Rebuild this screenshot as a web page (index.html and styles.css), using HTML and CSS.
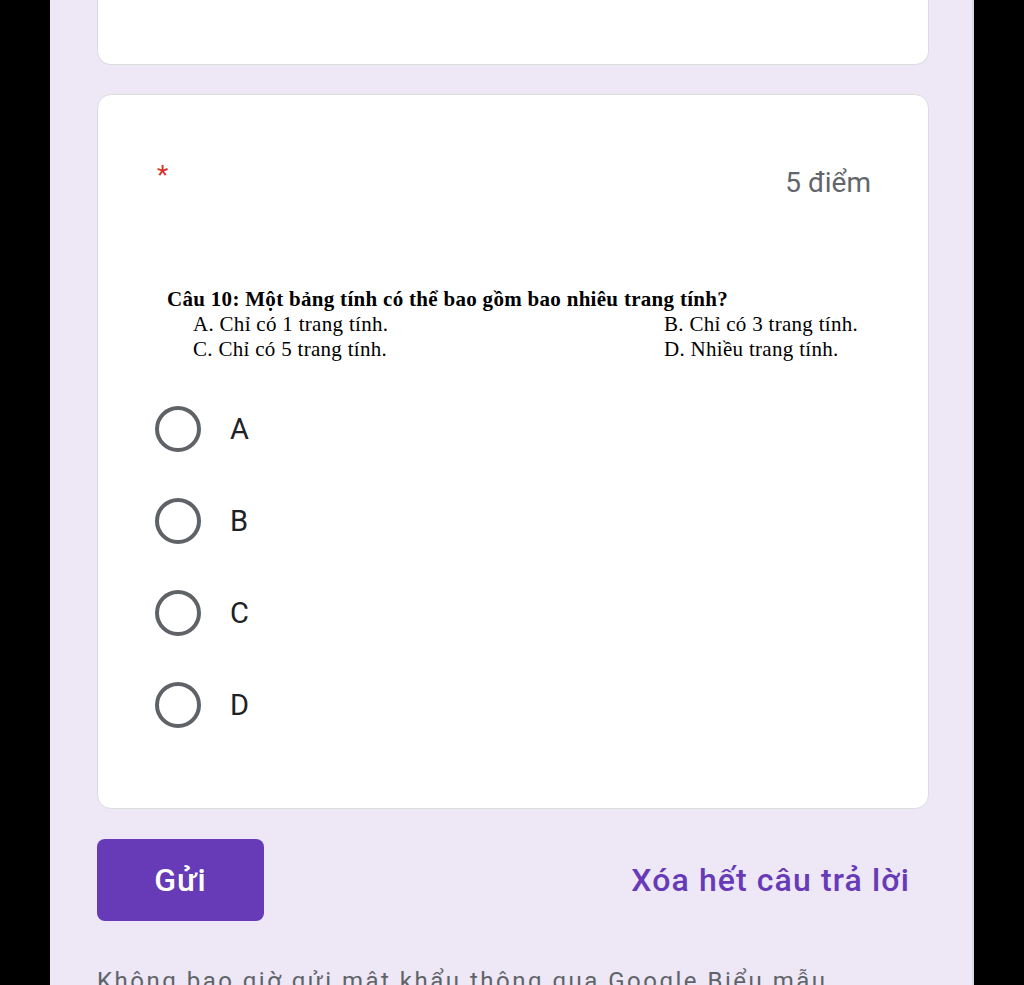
FILE: index.html
```html
<!DOCTYPE html>
<html lang="vi">
<head>
    <meta charset="UTF-8">
    <meta name="viewport" content="width=device-width, initial-scale=1.0">
    <title>Biểu mẫu</title>
    <link rel="stylesheet" href="styles.css">
</head>
<body>
    <div class="page">
        <!-- Thẻ câu hỏi trước (bị cắt) -->
        <div class="card card-cut"></div>

        <!-- Câu 10 -->
        <div class="card question">
            <div class="q-head">
                <span class="required">*</span>
                <span class="points">5 điểm</span>
            </div>

            <div class="q-text">
                <p class="q-title">Câu 10: Một bảng tính có thể bao gồm bao nhiêu trang tính?</p>
                <div class="q-options">
                    <span>A. Chỉ có 1 trang tính.</span>
                    <span>B. Chỉ có 3 trang tính.</span>
                    <span>C. Chỉ có 5 trang tính.</span>
                    <span>D. Nhiều trang tính.</span>
                </div>
            </div>

            <div class="choices">
                <label class="choice"><span class="radio"></span>A</label>
                <label class="choice"><span class="radio"></span>B</label>
                <label class="choice"><span class="radio"></span>C</label>
                <label class="choice"><span class="radio"></span>D</label>
            </div>
        </div>

        <div class="actions">
            <button class="submit">Gửi</button>
            <a class="clear" href="#">Xóa hết câu trả lời</a>
        </div>

        <p class="notice">Không bao giờ gửi mật khẩu thông qua Google Biểu mẫu</p>
    </div>
</body>
</html>
```

FILE: styles.css
```css
/* Toàn trang */
body {
    margin: 0;
    background: #000;
    font-family: Roboto, 'Noto Sans', sans-serif;
    height: 985px;
    overflow: hidden;
}

.page {
    width: 924px;
    margin-left: 50px;
    padding: 0 43px 0 47px;
    background: #ede7f6;
    min-height: 985px;
    box-sizing: border-box;
    border-right: 2px solid #d9d6e0;
}

/* Thẻ */
.card {
    background: #fff;
    border: 1px solid #dadce0;
    border-radius: 14px;
    box-sizing: border-box;
}

.card-cut {
    height: 65px;
    border-top: none;
    border-radius: 0 0 14px 14px;
    margin-bottom: 29px;
}

.question {
    height: 715px;
    padding: 0 57px 0 57px;
}

.q-head {
    display: flex;
    justify-content: space-between;
    align-items: flex-start;
    padding-top: 67px;
    height: 40px;
}

.required {
    color: #d93025;
    font-size: 26px;
    line-height: 26px;
    margin-left: 2px;
}

.points {
    color: #62666b;
    font-size: 28px;
    line-height: 42px;
}

/* Nội dung câu hỏi */
.q-text {
    margin: 85px 0 0 12px;
    font-family: 'Liberation Serif', 'DejaVu Serif', serif;
    font-size: 21px;
    letter-spacing: 0.3px;
    line-height: 25px;
    color: #000;
}

.q-title {
    margin: 0;
    font-weight: bold;
}

.q-options {
    display: grid;
    grid-template-columns: 471px 1fr;
    padding-left: 26px;
}

/* Lựa chọn */
.choices {
    margin-top: 21px;
}

.choice {
    display: flex;
    align-items: center;
    height: 92px;
    font-size: 29px;
    color: #202124;
}

.radio {
    width: 38px;
    height: 38px;
    border: 4px solid #5f6368;
    border-radius: 50%;
    margin-right: 29px;
}

/* Nút */
.actions {
    display: flex;
    justify-content: space-between;
    align-items: center;
    margin-top: 30px;
    padding-right: 19px;
}

.submit {
    width: 167px;
    height: 82px;
    border: none;
    border-radius: 8px;
    background: #673ab7;
    color: #fff;
    font-family: Roboto, sans-serif;
    font-size: 32px;
    font-weight: 500;
    letter-spacing: 1px;
    cursor: pointer;
}

.clear {
    color: #673ab7;
    font-size: 32px;
    font-weight: 500;
    letter-spacing: 1.1px;
    text-decoration: none;
}

.notice {
    margin: 46px 0 0;
    color: #5f6368;
    font-size: 24px;
    letter-spacing: 2.5px;
    white-space: nowrap;
}
```
